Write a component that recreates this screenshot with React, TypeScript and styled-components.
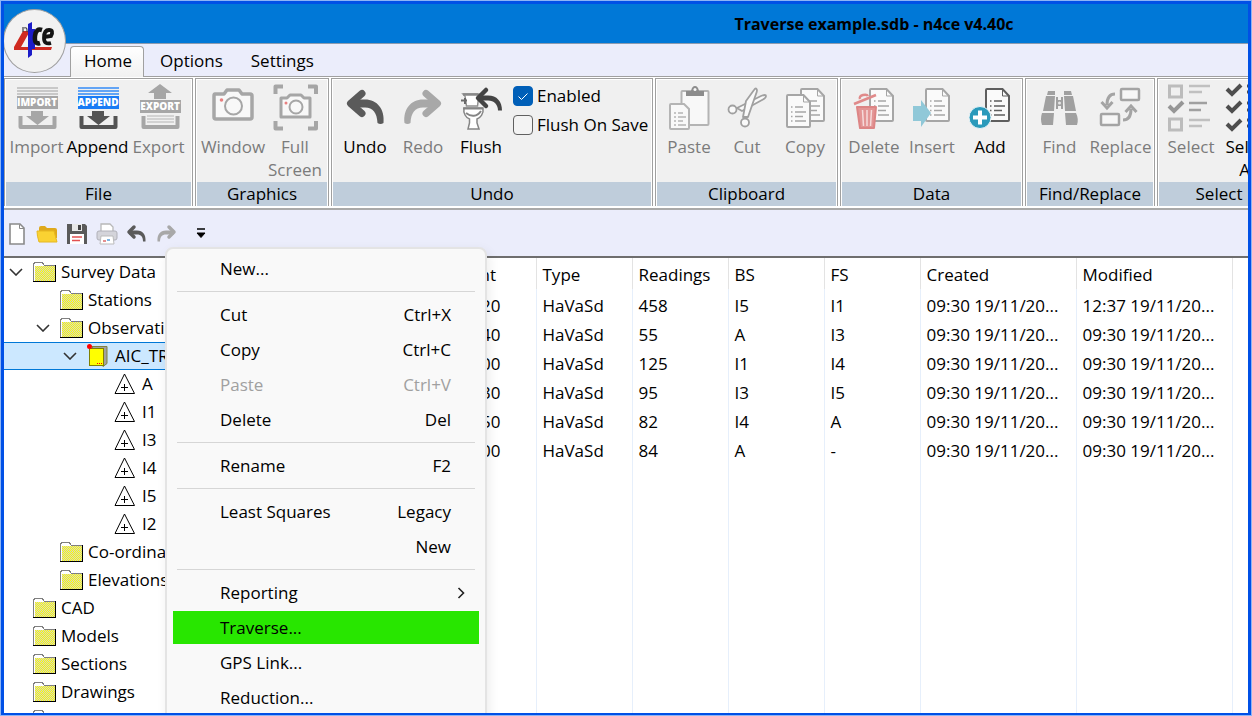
import React from "react";
import styled, { createGlobalStyle, css } from "styled-components";

const GlobalStyle = createGlobalStyle`
  *, *::before, *::after { box-sizing: border-box; }
  body {
    margin: 0;
    overflow: hidden;
    font-family: "Open Sans", "Noto Sans", sans-serif;
    font-size: 17px;
    line-height: 23px;
    color: #000;
  }
  button, input, table { font: inherit; color: inherit; }
`;

const Frame = styled.div`
  height: 100vh;
  border: 1px solid #8db4f5;
  background: #0050e6;
  padding: 2px 2px 1px;
  display: flex;
`;

const AppWindow = styled.main`
  position: relative;
  flex: 1;
  min-width: 0;
  border: 1px solid #0050e6;
  background: #ebedfb;
  display: flex;
  flex-direction: column;
  overflow: hidden;
`;

const TitleBar = styled.header`
  flex: none;
  height: 40px;
  background: #0078d7;
  border-bottom: 1px solid #8c9bb0;
  display: flex;
  align-items: center;
  justify-content: center;
  padding: 2px 0 0 496px;
`;

const Title = styled.h1`
  margin: 0;
  font-size: 16px;
  font-weight: 700;
  line-height: 23px;
  white-space: nowrap;
`;

const LogoButton = styled.button`
  position: absolute;
  left: -1px;
  top: 5px;
  width: 63px;
  height: 64px;
  padding: 0;
  border: 1px solid #a0a0a0;
  border-radius: 50%;
  background: #f2f2f2;
  z-index: 2;
`;

const TabBar = styled.nav`
  flex: none;
  height: 33px;
  padding: 2px 0 0 66px;
  display: flex;
  border-bottom: 1px solid #a0a0a0;
`;

const Tab = styled.button<{ $active?: boolean }>`
  height: 31px;
  padding: 0 11px 3px 13px;
  margin-right: 2px;
  border: 1px solid transparent;
  border-bottom: 0;
  border-radius: 4px 4px 0 0;
  background: none;
  line-height: 23px;
  ${(p) =>
    p.$active &&
    css`
      border-color: #a0a0a0;
      background: linear-gradient(#ffffff, #f0f0f0);
      height: 32px;
      padding-bottom: 4px;
    `}
`;

const Ribbon = styled.div`
  flex: none;
  height: 133px;
  display: flex;
  gap: 2px;
  background: #fff;
  padding-top: 1px;
  padding-bottom: 2px;
  border-bottom: 2px solid #a9a9a9;
  overflow: hidden;
`;

const GroupBox = styled.section<{ $width: number }>`
  flex: none;
  width: ${(p) => p.$width}px;
  border: 1px solid #a0a0a0;
  border-bottom: 0;
  padding: 1px 1px 0;
  display: flex;
  flex-direction: column;
`;

const GroupBody = styled.div<{ $pad: number }>`
  flex: 1;
  background: #f0f0f0;
  display: flex;
  padding: 2px 0 0 ${(p) => p.$pad}px;
`;

const GroupLabel = styled.h2`
  margin: 0;
  height: 25px;
  background: #bfcddb;
  font-size: 17px;
  font-weight: 400;
  line-height: 24px;
  text-align: center;
`;

const ToolButton = styled.button<{ $width: number }>`
  flex: none;
  width: ${(p) => p.$width}px;
  padding: 0;
  border: 0;
  background: none;
  display: flex;
  flex-direction: column;
  align-items: center;
  gap: 3px;
  height: 100px;
  line-height: 23px;
  &:disabled { color: #7b7b7b; }
  svg { flex: none; }
`;

const Checks = styled.div`
  display: flex;
  flex-direction: column;
  gap: 6px;
  padding: 2px 0 0 3px;
`;

const CheckLabel = styled.label`
  display: flex;
  align-items: center;
  gap: 4px;
  height: 23px;
  white-space: nowrap;
`;

const CheckBox = styled.input`
  appearance: none;
  margin: 0;
  width: 20px;
  height: 20px;
  border: 1px solid #606060;
  border-radius: 4px;
  background: #f3f3f3;
  &:checked {
    border-color: #005fb8;
    background: #005fb8
      url("data:image/svg+xml,%3Csvg xmlns='http://www.w3.org/2000/svg' viewBox='0 0 18 18'%3E%3Cpath d='M4.500 9.500l3 3 6-6' fill='none' stroke='white'/%3E%3C/svg%3E");
  }
`;

const QuickBar = styled.div`
  flex: none;
  height: 46px;
  display: flex;
  align-items: center;
  padding-top: 2px;
`;

const QuickButton = styled.button<{ $gap?: boolean }>`
  width: 30px;
  height: 28px;
  padding: 0;
  margin-left: ${(p) => (p.$gap ? "4px" : "0")};
  border: 0;
  background: none;
  display: flex;
  align-items: center;
  justify-content: center;
  &:first-child { margin-left: -2px; }
`;

const Workspace = styled.div`
  flex: 1;
  min-height: 0;
  display: flex;
  background: #fff;
  border-top: 2px solid #6e6e6e;
  overflow: hidden;
`;

const Tree = styled.ul`
  flex: none;
  width: 434px;
  margin: 0;
  padding: 0;
  list-style: none;
`;

const TreeRow = styled.li<{ $level: number; $selected?: boolean }>`
  height: 28px;
  padding-left: ${(p) => p.$level * 27 + 5}px;
  padding-bottom: 1px;
  display: flex;
  align-items: center;
  white-space: nowrap;
  ${(p) =>
    p.$selected &&
    css`
      background: #cce8ff;
      box-shadow: inset 0 1px #0078d7, inset 0 -1px #0078d7;
    `}
`;

const TreeToggle = styled.span`
  width: 24px;
  height: 28px;
  display: flex;
  align-items: center;
`;

const TreeIcon = styled.span`
  width: 28px;
  display: flex;
`;

const Table = styled.table`
  table-layout: fixed;
  width: 794px;
  border-collapse: collapse;
`;

const Th = styled.th`
  height: 31px;
  padding: 2px 0 0 6px;
  border-right: 1px solid #e3e3e3;
  font-weight: 400;
  text-align: left;
`;

const Td = styled.td`
  height: 29px;
  padding: 3px 0 0 6px;
  border-right: 1px solid #e6effb;
  white-space: nowrap;
  overflow: hidden;
`;

const HeightCell = styled(Td)`
  padding-right: 35px;
  text-align: right;
`;

const EmptyCell = styled(Td)`
  height: 100vh;
`;

const Menu = styled.div`
  position: absolute;
  left: 161px;
  top: 243px;
  width: 322px;
  padding: 2px 6px 12px;
  border: 2px solid #e4e4e4;
  border-radius: 8px;
  background: #f9f9f9;
  box-shadow: 2px 4px 12px rgba(0, 0, 0, 0.08);
  display: flex;
  flex-direction: column;
  z-index: 3;
`;

const MenuItem = styled.button<{ $highlight?: boolean }>`
  width: 100%;
  height: 33px;
  margin: 1px 0;
  padding: 0 28px 0 47px;
  border: 0;
  background: ${(p) => (p.$highlight ? "#28e600" : "none")};
  display: flex;
  align-items: center;
  justify-content: space-between;
  text-align: left;
  &:disabled { color: #a0a0a0; }
`;

const MenuRule = styled.hr`
  width: auto;
  margin: 5px 4px;
  border: 0;
  height: 1px;
  background: #d6d6d6;
`;

const SubArrow = styled.svg`
  margin-right: -15px;
`;

/* ---------- drawings ---------- */

const DARK = "#545454";
const LIGHT = "#a6a6a6";

const Icon = ({ children }: { children: React.ReactNode }) => (
  <svg width="48" height="50" viewBox="0 0 48 50" fill="none" aria-hidden="true">
    {children}
  </svg>
);

const bannerText = {
  fontFamily: "Open Sans, sans-serif",
  fontSize: 10,
  fontWeight: 800,
  fill: "#fff",
  textAnchor: "middle" as const,
};

const LoadIcon = ({ word, banner, lines, ink }: { word: string; banner: string; lines: string; ink: string }) => (
  <Icon>
    <path d="M4 6h41M4 9h41M4 12h41" stroke={lines} strokeWidth="2" />
    <rect x="4" y="14" width="41" height="13" fill={banner} />
    <text x="24" y="24" {...bannerText}>{word}</text>
    <path d="M18 29h12v5h6L24.500 43 13 34h5z" fill={ink} />
    <path d="M7.500 34v11h34V34" stroke={ink} strokeWidth="4" strokeLinejoin="round" />
  </Icon>
);

const ExportIcon = () => (
  <Icon>
    <path d="M25 2l12 9h-6v6H19v-6h-6z" fill={LIGHT} />
    <rect x="5" y="18" width="41" height="13" fill={LIGHT} />
    <text x="25" y="28" {...bannerText}>EXPORT</text>
    <path d="M12 34h27M12 37h27M12 40h27" stroke="#c8c8c8" strokeWidth="1.500" />
    <path d="M8.500 34v11h34V34" stroke={LIGHT} strokeWidth="4" strokeLinejoin="round" />
  </Icon>
);

const CameraIcon = () => (
  <Icon>
    <path d="M6 12h9l3-4h12l3 4h8q2 0 2 2v21q0 2-2 2H7q-2 0-2-2V14q0-2 1-2z" fill="#f8f8f8" stroke={LIGHT} strokeWidth="3.500" strokeLinejoin="round" />
    <circle cx="24.500" cy="24" r="8.500" stroke={LIGHT} strokeWidth="2" />
    <circle cx="12.500" cy="18" r="1.800" fill="#e88080" />
  </Icon>
);

const FullScreenIcon = () => (
  <Icon>
    <path d="M12 4.500H4.500V12M37 4.500h8V12M12 46.500H4.500V39M37 46.500h8V39" stroke={LIGHT} strokeWidth="4" strokeLinejoin="round" />
    <path d="M10 16h6l3-3h11l3 3h6v19H10z" fill="#f8f8f8" stroke={LIGHT} strokeWidth="3" strokeLinejoin="round" />
    <circle cx="25" cy="25" r="6.500" stroke={LIGHT} strokeWidth="2" />
    <circle cx="15" cy="21" r="1.500" fill="#e88080" />
  </Icon>
);

const undoHead = "M21 11.500L9.500 21.500l11.500 10";
const undoTail = "M9 17.500h14C36 17 44 27 42.500 41q-3 2-6 0C36 31 32 25.500 24 25.500H9z";

const UndoIcon = ({ ink }: { ink: string }) => (
  <Icon>
    <path d={undoHead} stroke={ink} strokeWidth="7" strokeLinecap="round" strokeLinejoin="round" />
    <path d={undoTail} fill={ink} />
  </Icon>
);

const RedoIcon = ({ ink }: { ink: string }) => (
  <Icon>
    <g transform="matrix(-1 0 0 1 48 0)">
      <path d={undoHead} stroke={ink} strokeWidth="7" strokeLinecap="round" strokeLinejoin="round" />
      <path d={undoTail} fill={ink} />
    </g>
  </Icon>
);

const FlushIcon = () => (
  <Icon>
    <path d="M6 12h16l-1.500 12H9.500L8 14z" fill="#fff" stroke="#909090" strokeWidth="1.500" />
    <path d="M6 12.500h15" stroke="#888" strokeWidth="2.500" />
    <path d="M4 18.500h6M8 16v6" stroke="#6a6a6a" strokeWidth="2" />
    <path d="M7 26h19c1 6-3 10-6 11v4l2 6H11l1.500-6v-4C9 36 6 31 7 26z" fill="#fff" stroke="#858585" strokeWidth="1.500" />
    <path d="M6 26.500h20M9 31c5 4 11 4 15-2" stroke="#858585" strokeWidth="2" />
    <path d="M29 8l-8 8 8 8" stroke="#444" strokeWidth="4.500" strokeLinecap="round" strokeLinejoin="round" />
    <path d="M21 13.500h10c9 0 14 6 14 15h-4c0-6-4-10-10-10H21z" fill="#444" />
  </Icon>
);

const Sheet = ({ x, y, ink = LIGHT }: { x: number; y: number; ink?: string }) => (
  <g transform={`translate(${x} ${y})`}>
    <path d="M2 1h15.500L24 8v24q0 1-1 1H2q-1 0-1-1V2q0-1 1-1z" fill="#fafafa" stroke={ink} strokeWidth="2" />
    <path d="M17.500 2v6H23" stroke={ink} />
    <path d="M5 13h1.500M9 13h8M5 18h1.500M9 18h11M5 22.500h1.500M9 22.500h8M5 27h1.500M9 27h11" stroke={ink} strokeWidth="1.500" />
  </g>
);

const PasteIcon = () => (
  <Icon>
    <rect x="16.500" y="9" width="27" height="34" rx="1" fill="#f8f8f8" stroke="#b4b4b4" strokeWidth="2" />
    <path d="M21 14V9h5q1-5 4-5t4 5h5v5z" fill="#8c8c8c" />
    <circle cx="30" cy="7.500" r="1.500" fill="#f8f8f8" />
    <path d="M6 22h13l5 5v19q0 1-1 1H6q-1 0-1-1V23q0-1 1-1z" fill="#f8f8f8" stroke="#b4b4b4" strokeWidth="2" />
    <path d="M9 31h2M13 31h5M9 35h2M13 35h8M9 39h2M13 39h5M9 43h2M13 43h8" stroke="#b4b4b4" strokeWidth="1.500" />
  </Icon>
);

const CutIcon = () => (
  <Icon>
    <g stroke="#a0a0a0" strokeWidth="1.800" strokeLinejoin="round" fill="#fafafa">
      <path d="M14 26L38 14q5-2 5 0 0 2-4 4L19 29z" />
      <path d="M20 35l3-16L31 8q2-3 3 0 0 2-1 4L25 35z" />
      <circle cx="9.500" cy="27.500" r="4" />
      <circle cx="22" cy="40.500" r="4" />
    </g>
  </Icon>
);

const CopyIcon = () => (
  <Icon><Sheet x={19} y={6} /><Sheet x={5} y={12} /></Icon>
);

const DeleteIcon = () => (
  <Icon>
    <Sheet x={19} y={6} />
    <path d="M7 25h19l-2 21H10z" fill="#e39595" stroke="#dd8585" strokeWidth="2" strokeLinejoin="round" />
    <path d="M12.500 28l1 16M17 28v16M21.500 28l-1 16" stroke="#f6dada" strokeWidth="1.500" />
    <path d="M4 22l22-9M10 17q-1-3 3-4t5 1" stroke="#e08a8a" strokeWidth="2.500" />
  </Icon>
);

const InsertIcon = () => (
  <Icon>
    <Sheet x={17} y={6} />
    <path d="M5 24h8v-6l10 13-10 14v-6H5z" fill="#90c8d8" />
  </Icon>
);

const AddIcon = () => (
  <Icon>
    <Sheet x={19} y={6} ink="#5e5e5e" />
    <circle cx="14" cy="35.500" r="11" fill="#2a9abb" stroke="#e8f4f8" />
    <path d="M14 28.500v14M7 35.500h14" stroke="#fff" strokeWidth="4" />
  </Icon>
);

const FindIcon = () => (
  <Icon>
    <g fill="#a0a0a0">
      <path d="M12 9h7v4h-8zM28 9h7l1 4h-8z" />
      <path d="M10 14h9l-1 15H7zM28 14h9l3 15H29z" />
      <path d="M6 31h12l-1 12H6q-2-6 0-12zM29 31h11q3 6 1 12H30z" />
      <path d="M20 15h2v3h3v-3h2v12h-2v-3h-3v3h-2z" />
    </g>
    <circle cx="23.500" cy="21" r="1.500" fill="#e6e6e6" />
  </Icon>
);

const ReplaceIcon = () => (
  <Icon>
    <g stroke="#a4a4a4">
      <rect x="24" y="7" width="18" height="11" rx="1" fill="#f6f6f6" strokeWidth="2.500" />
      <rect x="4" y="32" width="18" height="11" rx="1" fill="#f6f6f6" strokeWidth="2.500" />
      <path d="M18 12q-8 0-8 11M4.500 20l5.500 6 5.500-6M26 38q8 0 8-11M28.500 30l5.500-6 5.500 6" strokeWidth="3" />
    </g>
  </Icon>
);

const SelectIcon = () => (
  <Icon>
    <path d="M2.500 4h12v11h-12zM2.500 37h12v11h-12z" stroke="#bcbcbc" strokeWidth="3" />
    <path d="M2 24l5 5 9-9" stroke="#969696" strokeWidth="4" />
    <path d="M22 4h21M22 10h13M22 38h21M22 44h13" stroke="#c0c0c0" strokeWidth="2.500" />
    <path d="M22 21h18M22 28h12" stroke="#a0a0a0" strokeWidth="2.500" />
  </Icon>
);

const SelectAllIcon = () => (
  <Icon>
    <path d="M2 7l5 5 9-9M2 24l5 5 9-9M2 42l5 5 9-9" stroke="#4e4e4e" strokeWidth="4" />
    <path d="M22 4h20M22 10h13M22 21h20M22 28h13M22 38h20M22 44h13" stroke="#4e4e4e" strokeWidth="3" />
  </Icon>
);

const Logo = () => (
  <svg width="61" height="62" viewBox="0 0 61 62" aria-hidden="true">
    <path d="M19 21L10 37v3h37l1-3H17l9-16z" fill="#cf2a20" />
    <path d="M19 17v5M20 18q3-1 3 2v2" stroke="#444" strokeWidth="1.200" fill="none" />
    <path d="M24 14l4-2v33l-4 3z" fill="#1c1cc8" />
    <path d="M28 19h3v20h-3z" fill="#1c1cc8" />
    <path d="M38 20q-6-2-7 6-1 9 5 7" stroke="#141414" strokeWidth="4.500" fill="none" />
    <path d="M40 27l7-1q3-6-2-6t-5 8q0 7 7 5" stroke="#141414" strokeWidth="3.800" fill="none" />
  </svg>
);

const FolderIcon = () => (
  <svg width="24" height="22" viewBox="0 0 24 22" shapeRendering="crispEdges" aria-hidden="true">
    <defs>
      <pattern id="dither" width="2" height="2" patternUnits="userSpaceOnUse">
        <rect width="2" height="2" fill="#ffff00" />
        <path d="M0 0h1v1H0zM1 1h1v1H1z" fill="#d0d0d0" />
      </pattern>
    </defs>
    <path d="M1 4l2-3h7l2 3h10v16H1z" fill="#fff" />
    <path d="M2 5h20v15H2z" fill="url(#dither)" />
    <path d="M0 20V4l2-3h7l2 3h11" fill="none" stroke="#808080" />
    <path d="M0 20.500h23M22.500 4v17" fill="none" stroke="#000" strokeWidth="1.500" />
  </svg>
);

const JobIcon = () => (
  <svg width="24" height="24" viewBox="0 0 24 24" aria-hidden="true">
    <path d="M5 2.500h15v17l-4 3z" fill="#a0a0a0" stroke="#808040" />
    <rect x="2.500" y="4.500" width="14" height="17" fill="#ffff00" stroke="#808000" />
    <path d="M10 19.500h5" stroke="#f00" strokeDasharray="1 1" />
    <circle cx="2.500" cy="2.500" r="2.500" fill="#f00" />
  </svg>
);

const StationIcon = () => (
  <svg width="22" height="22" viewBox="0 0 22 22" fill="none" stroke="#000" aria-hidden="true">
    <path d="M10.500 1L1 20.500h19.500zM10.500 11v7M7 14.500h7" />
  </svg>
);

const Chevron = () => (
  <svg width="14" height="8" viewBox="0 0 14 8" fill="none" stroke="#333" strokeWidth="1.600" aria-hidden="true">
    <path d="M1 1l6 6 6-6" />
  </svg>
);

const SmallIcon = ({ children }: { children: React.ReactNode }) => (
  <svg width="24" height="24" viewBox="0 0 24 24" fill="none" aria-hidden="true">{children}</svg>
);

const SmallArrow = ({ ink, flip }: { ink: string; flip?: boolean }) => (
  <SmallIcon>
    <g transform={flip ? "matrix(-1 0 0 1 23 0)" : undefined}>
      <path d="M9 5l-5 5 5 5" stroke={ink} strokeWidth="3.500" strokeLinecap="round" strokeLinejoin="round" />
      <path d="M4 8.500h8c6 0 9 4 8.500 11H18c0-4.500-2-7-6-7H4z" fill={ink} />
    </g>
  </SmallIcon>
);

/* ---------- data ---------- */

type Tool = { label: string; icon: React.ReactNode; enabled?: boolean };
type Group = { name: string; width: number; pad: number; toolWidth: number; tools: Tool[]; checks?: boolean };

const groups: Group[] = [
  {
    name: "File", width: 189, pad: 0, toolWidth: 61,
    tools: [
      { label: "Import", icon: <LoadIcon word="IMPORT" banner="#a6a6a6" lines="#c8c8c8" ink={LIGHT} /> },
      { label: "Append", icon: <LoadIcon word="APPEND" banner="#1a7cf5" lines="#62a4f5" ink={DARK} />, enabled: true },
      { label: "Export", icon: <ExportIcon /> },
    ],
  },
  {
    name: "Graphics", width: 134, pad: 5, toolWidth: 62,
    tools: [
      { label: "Window", icon: <CameraIcon /> },
      { label: "Full Screen", icon: <FullScreenIcon /> },
    ],
  },
  {
    name: "Undo", width: 322, pad: 3, toolWidth: 58, checks: true,
    tools: [
      { label: "Undo", icon: <UndoIcon ink="#5a5a5a" />, enabled: true },
      { label: "Redo", icon: <RedoIcon ink="#a8a8a8" /> },
      { label: "Flush", icon: <FlushIcon />, enabled: true },
    ],
  },
  {
    name: "Clipboard", width: 183, pad: 3, toolWidth: 58,
    tools: [
      { label: "Paste", icon: <PasteIcon /> },
      { label: "Cut", icon: <CutIcon /> },
      { label: "Copy", icon: <CopyIcon /> },
    ],
  },
  {
    name: "Data", width: 183, pad: 3, toolWidth: 58,
    tools: [
      { label: "Delete", icon: <DeleteIcon /> },
      { label: "Insert", icon: <InsertIcon /> },
      { label: "Add", icon: <AddIcon />, enabled: true },
    ],
  },
  {
    name: "Find/Replace", width: 130, pad: 2, toolWidth: 61,
    tools: [
      { label: "Find", icon: <FindIcon /> },
      { label: "Replace", icon: <ReplaceIcon /> },
    ],
  },
  {
    name: "Select", width: 124, pad: 3, toolWidth: 58,
    tools: [
      { label: "Select", icon: <SelectIcon /> },
      { label: "Select All", icon: <SelectAllIcon />, enabled: true },
    ],
  },
];

type Node = { label: string; level: number; open?: boolean; selected?: boolean; kind?: "job" | "station" };

const nodes: Node[] = [
  { label: "Survey Data", level: 0, open: true },
  { label: "Stations", level: 1 },
  { label: "Observations", level: 1, open: true },
  { label: "AIC_TRAV", level: 2, open: true, selected: true, kind: "job" },
  ...["A", "I1", "I3", "I4", "I5", "I2"].map((label) => ({ label, level: 3, kind: "station" as const })),
  { label: "Co-ordinates", level: 1 },
  { label: "Elevations", level: 1 },
  { label: "CAD", level: 0 },
  { label: "Models", level: 0 },
  { label: "Sections", level: 0 },
  { label: "Drawings", level: 0 },
  { label: "", level: 0 },
];

const columns = [
  { name: "Height", width: 98 },
  { name: "Type", width: 96 },
  { name: "Readings", width: 96 },
  { name: "BS", width: 96 },
  { name: "FS", width: 96 },
  { name: "Created", width: 156 },
  { name: "Modified", width: 156 },
];

const rows = [
  ["1.620", "HaVaSd", "458", "I5", "I1", "09:30 19/11/20...", "12:37 19/11/20..."],
  ["1.540", "HaVaSd", "55", "A", "I3", "09:30 19/11/20...", "09:30 19/11/20..."],
  ["1.600", "HaVaSd", "125", "I1", "I4", "09:30 19/11/20...", "09:30 19/11/20..."],
  ["1.630", "HaVaSd", "95", "I3", "I5", "09:30 19/11/20...", "09:30 19/11/20..."],
  ["1.550", "HaVaSd", "82", "I4", "A", "09:30 19/11/20...", "09:30 19/11/20..."],
  ["1.600", "HaVaSd", "84", "A", "-", "09:30 19/11/20...", "09:30 19/11/20..."],
];

type Entry = { label: string; hint?: string; disabled?: boolean; highlight?: boolean; submenu?: boolean };

const menu: Entry[][] = [
  [{ label: "New..." }],
  [
    { label: "Cut", hint: "Ctrl+X" },
    { label: "Copy", hint: "Ctrl+C" },
    { label: "Paste", hint: "Ctrl+V", disabled: true },
    { label: "Delete", hint: "Del" },
  ],
  [{ label: "Rename", hint: "F2" }],
  [{ label: "Least Squares", hint: "Legacy" }, { label: "", hint: "New" }],
  [
    { label: "Reporting", submenu: true },
    { label: "Traverse...", highlight: true },
    { label: "GPS Link..." },
    { label: "Reduction..." },
  ],
];

/* ---------- page ---------- */

const QuickTools = () => (
  <QuickBar>
    <QuickButton aria-label="New">
      <SmallIcon><path d="M5 2h10l4 4v16H5z" fill="#fff" stroke="#8a8a8a" strokeWidth="1.600" /><path d="M14.500 2.500v4H19" stroke="#8a8a8a" /></SmallIcon>
    </QuickButton>
    <QuickButton aria-label="Open">
      <SmallIcon><path d="M4 6q0-2 2-2h4l2 2h8q2 0 2 2v8H4z" fill="#dfa91c" /><path d="M2 9h17l3 11H4q-2-6-2-11z" fill="#fad232" stroke="#e6b820" /></SmallIcon>
    </QuickButton>
    <QuickButton aria-label="Save">
      <SmallIcon><path d="M2 2h18l2 2v18H2z" fill="#5a5a5a" /><path d="M7 2h10v7H7z" fill="#e8e8e8" /><path d="M13 3h3v5h-3z" fill="#444" /><path d="M5 12h14v10H5z" fill="#fff" /><path d="M7 15h10M7 18.500h8" stroke="#e25050" strokeWidth="1.500" /></SmallIcon>
    </QuickButton>
    <QuickButton aria-label="Print">
      <SmallIcon><path d="M6 9V2h9l3 3v4" fill="#fff" stroke="#b8b8b8" strokeWidth="1.300" /><rect x="2" y="9" width="20" height="9" rx="2" fill="#d4d4da" stroke="#b0b0b8" /><path d="M6 14h12l1 8H5z" fill="#fff" stroke="#bbb" /><path d="M8 19h3" stroke="#e59090" strokeWidth="2" /><path d="M12 18h3" stroke="#80b4e0" strokeWidth="2" /></SmallIcon>
    </QuickButton>
    <QuickButton aria-label="Undo"><SmallArrow ink="#5a5a5a" /></QuickButton>
    <QuickButton aria-label="Redo"><SmallArrow ink="#a8a8a8" flip /></QuickButton>
    <QuickButton aria-label="Customize toolbar" $gap>
      <SmallIcon><path d="M8 7h8" stroke="#000" strokeWidth="1.500" /><path d="M8 11h8l-4 4.500z" fill="#000" stroke="#000" /></SmallIcon>
    </QuickButton>
  </QuickBar>
);

const App = () => (
  <>
    <GlobalStyle />
    <Frame>
      <AppWindow>
        <TitleBar><Title>Traverse example.sdb - n4ce v4.40c</Title></TitleBar>
        <LogoButton aria-label="Application menu"><Logo /></LogoButton>
        <TabBar>
          <Tab $active>Home</Tab>
          <Tab>Options</Tab>
          <Tab>Settings</Tab>
        </TabBar>
        <Ribbon>
          {groups.map((g) => (
            <GroupBox key={g.name} $width={g.width}>
              <GroupBody $pad={g.pad}>
                {g.tools.map((t) => (
                  <ToolButton key={t.label} $width={g.toolWidth} disabled={!t.enabled}>
                    {t.icon}
                    <span>{t.label}</span>
                  </ToolButton>
                ))}
                {g.checks && (
                  <Checks>
                    <CheckLabel><CheckBox type="checkbox" defaultChecked />Enabled</CheckLabel>
                    <CheckLabel><CheckBox type="checkbox" />Flush On Save</CheckLabel>
                  </Checks>
                )}
              </GroupBody>
              <GroupLabel>{g.name}</GroupLabel>
            </GroupBox>
          ))}
        </Ribbon>
        <QuickTools />
        <Workspace>
          <Tree>
            {nodes.map((n, i) => (
              <TreeRow key={i} $level={n.level} $selected={n.selected}>
                <TreeToggle>{n.open && <Chevron />}</TreeToggle>
                <TreeIcon>
                  {n.kind === "job" ? <JobIcon /> : n.kind === "station" ? <StationIcon /> : <FolderIcon />}
                </TreeIcon>
                {n.label}
              </TreeRow>
            ))}
          </Tree>
          <div>
            <Table>
              <colgroup>
                {columns.map((c) => <col key={c.name} width={c.width} />)}
              </colgroup>
              <thead>
                <tr>{columns.map((c) => <Th key={c.name} scope="col">{c.name}</Th>)}</tr>
              </thead>
              <tbody>
                {rows.map((r, i) => (
                  <tr key={i}>
                    {r.map((v, j) => (j === 0 ? <HeightCell key={j}>{v}</HeightCell> : <Td key={j}>{v}</Td>))}
                  </tr>
                ))}
                <tr>{columns.map((c) => <EmptyCell key={c.name} />)}</tr>
              </tbody>
            </Table>
          </div>
        </Workspace>
        <Menu>
          {menu.map((section, i) => (
            <React.Fragment key={i}>
              {i > 0 && <MenuRule />}
              {section.map((m, j) => (
                <MenuItem key={j} disabled={m.disabled} $highlight={m.highlight}>
                  <span>{m.label}</span>
                  {m.hint && <span>{m.hint}</span>}
                  {m.submenu && (
                    <SubArrow width="9" height="14" viewBox="0 0 9 14" fill="none" stroke="#222" strokeWidth="1.600" aria-hidden="true">
                      <path d="M1.500 2l5 5-5 5" />
                    </SubArrow>
                  )}
                </MenuItem>
              ))}
            </React.Fragment>
          ))}
        </Menu>
      </AppWindow>
    </Frame>
  </>
);

export default App;
